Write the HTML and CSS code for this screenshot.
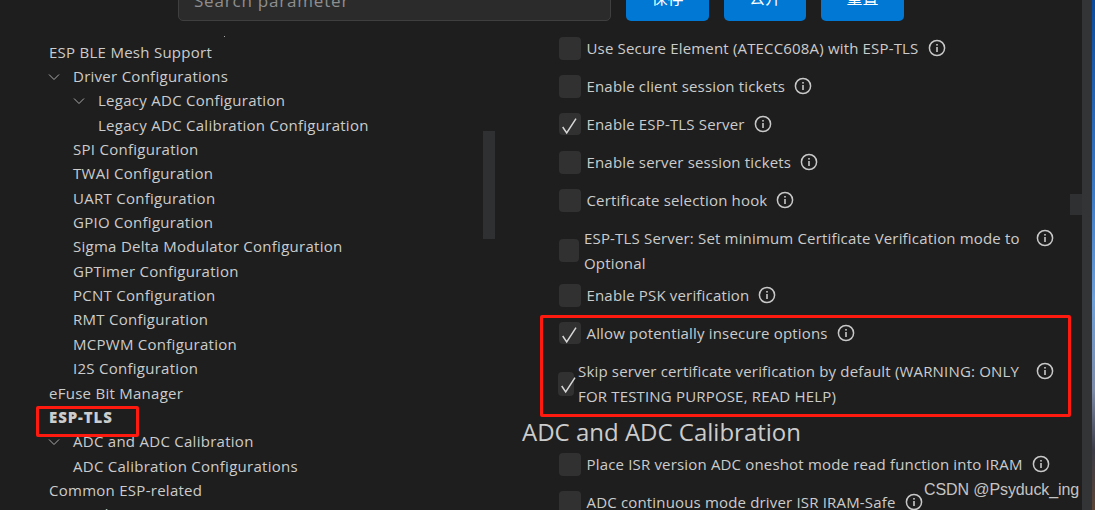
FILE: index.html
```html
<!DOCTYPE html>
<html lang="en">
<head>
<meta charset="utf-8">
<title>ESP-TLS</title>
<link rel="stylesheet" href="styles.css">
</head>
<body>
<svg class="defs" width="0" height="0" aria-hidden="true">
  <symbol id="info" viewBox="0 0 18 18">
    <circle cx="9" cy="9" r="7.6" fill="none" stroke="currentColor" stroke-width="1.5"/>
    <rect x="8.2" y="8" width="1.6" height="5" fill="currentColor"/>
    <rect x="8.2" y="5" width="1.6" height="1.6" fill="currentColor"/>
  </symbol>
  <symbol id="chev" viewBox="0 0 12 8">
    <path d="M1 1.5 6 6.5 11 1.5" fill="none" stroke="currentColor" stroke-width="1"/>
  </symbol>
  <symbol id="tick" viewBox="0 0 22 22">
    <path d="M3.7 14 7.7 20 17 5.7" fill="none" stroke="currentColor" stroke-width="1.5"/>
  </symbol>
</svg>
<div class="window">
  <div class="main">
    <header class="toolbar">
      <div class="search">Search parameter</div>
      <button class="btn">保存</button>
      <button class="btn btn-mid">公开</button>
      <button class="btn">重置</button>
    </header>
    <div class="content">
      <nav class="tree">
        <span class="tree-speck"></span>
        <div class="node l0">ESP BLE Mesh Support</div>
        <div class="node l0"><svg class="chev"><use href="#chev"/></svg>Driver Configurations</div>
        <div class="node l1"><svg class="chev"><use href="#chev"/></svg>Legacy ADC Configuration</div>
        <div class="node l2">Legacy ADC Calibration Configuration</div>
        <div class="node l1b">SPI Configuration</div>
        <div class="node l1b">TWAI Configuration</div>
        <div class="node l1b">UART Configuration</div>
        <div class="node l1b">GPIO Configuration</div>
        <div class="node l1b">Sigma Delta Modulator Configuration</div>
        <div class="node l1b">GPTimer Configuration</div>
        <div class="node l1b">PCNT Configuration</div>
        <div class="node l1b">RMT Configuration</div>
        <div class="node l1b">MCPWM Configuration</div>
        <div class="node l1b">I2S Configuration</div>
        <div class="node l0">eFuse Bit Manager</div>
        <div class="node l0 bold">ESP-TLS</div>
        <div class="node l0"><svg class="chev"><use href="#chev"/></svg>ADC and ADC Calibration</div>
        <div class="node l1b">ADC Calibration Configurations</div>
        <div class="node l0">Common ESP-related</div>
        <div class="node l0"><svg class="chev"><use href="#chev"/></svg>Hardware Settings</div>
        <div class="thumb tree-thumb"></div>
        <div class="mark mark-tree"></div>
      </nav>
      <section class="panel">
        <label class="row"><span class="box"></span><span class="text">Use Secure Element (ATECC608A) with ESP-TLS</span><svg class="info"><use href="#info"/></svg></label>
        <label class="row"><span class="box"></span><span class="text">Enable client session tickets</span><svg class="info"><use href="#info"/></svg></label>
        <label class="row"><span class="box on"><svg class="tick"><use href="#tick"/></svg></span><span class="text">Enable ESP-TLS Server</span><svg class="info"><use href="#info"/></svg></label>
        <label class="row"><span class="box"></span><span class="text">Enable server session tickets</span><svg class="info"><use href="#info"/></svg></label>
        <label class="row"><span class="box"></span><span class="text">Certificate selection hook</span><svg class="info"><use href="#info"/></svg></label>
        <label class="row two mid"><span class="box"></span><span class="text">ESP-TLS Server: Set minimum Certificate Verification mode to<br>Optional</span><svg class="info"><use href="#info"/></svg></label>
        <label class="row"><span class="box"></span><span class="text">Enable PSK verification</span><svg class="info"><use href="#info"/></svg></label>
        <label class="row"><span class="box on"><svg class="tick"><use href="#tick"/></svg></span><span class="text">Allow potentially insecure options</span><svg class="info"><use href="#info"/></svg></label>
        <label class="row two narrow"><span class="box on"><svg class="tick"><use href="#tick"/></svg></span><span class="text">Skip server certificate verification by default (WARNING: ONLY<br>FOR TESTING PURPOSE, READ HELP)</span><svg class="info"><use href="#info"/></svg></label>
        <h2 class="heading">ADC and ADC Calibration</h2>
        <label class="row"><span class="box"></span><span class="text">Place ISR version ADC oneshot mode read function into IRAM</span><svg class="info"><use href="#info"/></svg></label>
        <label class="row"><span class="box"></span><span class="text">ADC continuous mode driver ISR IRAM-Safe</span><svg class="info"><use href="#info"/></svg></label>
      </section>
    </div>
  </div>
  <div class="scrollbar"><div class="thumb panel-thumb"></div></div>
  <div class="desktop"></div>
  <div class="mark mark-panel"></div>
  <div class="watermark">CSDN @Psyduck_ing</div>
</div>
</body>
</html>
```

FILE: styles.css
```css
* { box-sizing: border-box; }
html, body { margin: 0; padding: 0; background: #1e1e1e; }
.defs { position: absolute; }

.window {
  position: relative;
  display: flex;
  width: 1095px;
  height: 510px;
  overflow: hidden;
  background: #1e1e1e;
  color: #cccccc;
  font-family: "Open Sans", "Noto Sans", sans-serif;
  font-size: 15px;
}
.main { flex: 1; min-width: 0; display: flex; flex-direction: column; }

.toolbar {
  flex: none;
  display: flex;
  gap: 15px;
  height: 41px;
  margin-top: -20px;
  padding-left: 178px;
}
.search {
  width: 433px;
  padding: 8px 15px;
  background: #2b2b2b;
  border: 1px solid #3f3f3f;
  border-radius: 5px;
  color: #8f8f8f;
  font-size: 17px;
  letter-spacing: 0.8px;
}
.btn {
  width: 83px;
  border: 0;
  border-radius: 5px;
  background: #0078d4;
  color: #fff;
  font-family: "Noto Sans CJK SC", sans-serif;
  font-size: 16px;
  padding: 0 0 8px;
}
.btn-mid { width: 82px; }

.content { flex: 1; display: flex; min-height: 0; }

.tree {
  position: relative;
  flex: none;
  width: 522px;
  padding-top: 18.7px;
  letter-spacing: 0.27px;
}
.tree-speck {
  position: absolute;
  left: 224px;
  top: 15px;
  width: 1px;
  height: 1px;
  background: #aaa;
}
.node {
  position: relative;
  height: 24.35px;
  line-height: 24px;
  white-space: nowrap;
}
.l0 { padding-left: 49px; }
.node.l0:has(.chev) { padding-left: 73px; }
.l1 { padding-left: 98px; }
.l1b { padding-left: 73px; }
.l2 { padding-left: 98px; }
.bold { font-weight: 800; letter-spacing: 0.9px; }
.chev {
  position: absolute;
  width: 12px;
  height: 8px;
  top: 9px;
  margin-left: -25px;
  color: #aaaaaa;
}

.thumb { position: absolute; background: #2f3032; }
.tree-thumb { left: 483px; top: 110px; width: 12px; height: 108px; }

.panel { flex: 1; min-width: 0; padding-top: 8px; letter-spacing: 0.17px; }
.row {
  display: flex;
  align-items: center;
  height: 38px;
  padding-left: 37px;
  line-height: 25px;
}
.box {
  flex: none;
  position: relative;
  width: 22px;
  height: 23px;
  margin-right: 5.5px;
  border-radius: 4px;
  background: #313131;
}
.on { height: 22px; }
.tick {
  position: absolute;
  left: 0;
  top: 0;
  width: 22px;
  height: 22px;
  color: #d8d8d8;
}
.info {
  flex: none;
  width: 18px;
  height: 18px;
  margin-left: 9px;
  color: #c8c8c8;
}
.two { height: 57px; padding-top: 6px; }
.two .info { margin-top: -25px; }
.mid .box { width: 20px; margin-right: 5px; }
.mid .text { width: 443px; }
.narrow { padding-left: 36px; }
.narrow .box { width: 16px; margin-right: 4px; height: 24px; }
.narrow .text { width: 449px; }

.heading {
  height: 36px;
  margin: 0;
  padding-top: 10px;
  line-height: 26px;
  font-size: 24px;
  font-weight: 400;
  letter-spacing: 0;
  color: #cccccc;
}

.scrollbar { position: relative; flex: none; width: 10px; background: #333435; }
.panel-thumb { right: 10px; top: 194px; width: 12px; height: 21px; }
.desktop {
  flex: none;
  width: 3px;
  background: linear-gradient(#0a4a9c 0, #3a78c4 190px, #6d9fd8 300px, #7c8aa8 390px, #3b3b46 450px, #5b4436 510px);
}

.mark { position: absolute; border: 3px solid #ff1a10; border-radius: 2px; }
.mark-tree { left: 36px; top: 385px; width: 103px; height: 31px; }
.mark-panel { left: 540px; top: 315px; width: 531px; height: 102px; }

.watermark {
  position: absolute;
  left: 924px;
  top: 481px;
  font-family: "Liberation Sans", sans-serif;
  font-size: 16px;
  letter-spacing: -0.1px;
  color: #c4c4c4;
  white-space: nowrap;
}
```
